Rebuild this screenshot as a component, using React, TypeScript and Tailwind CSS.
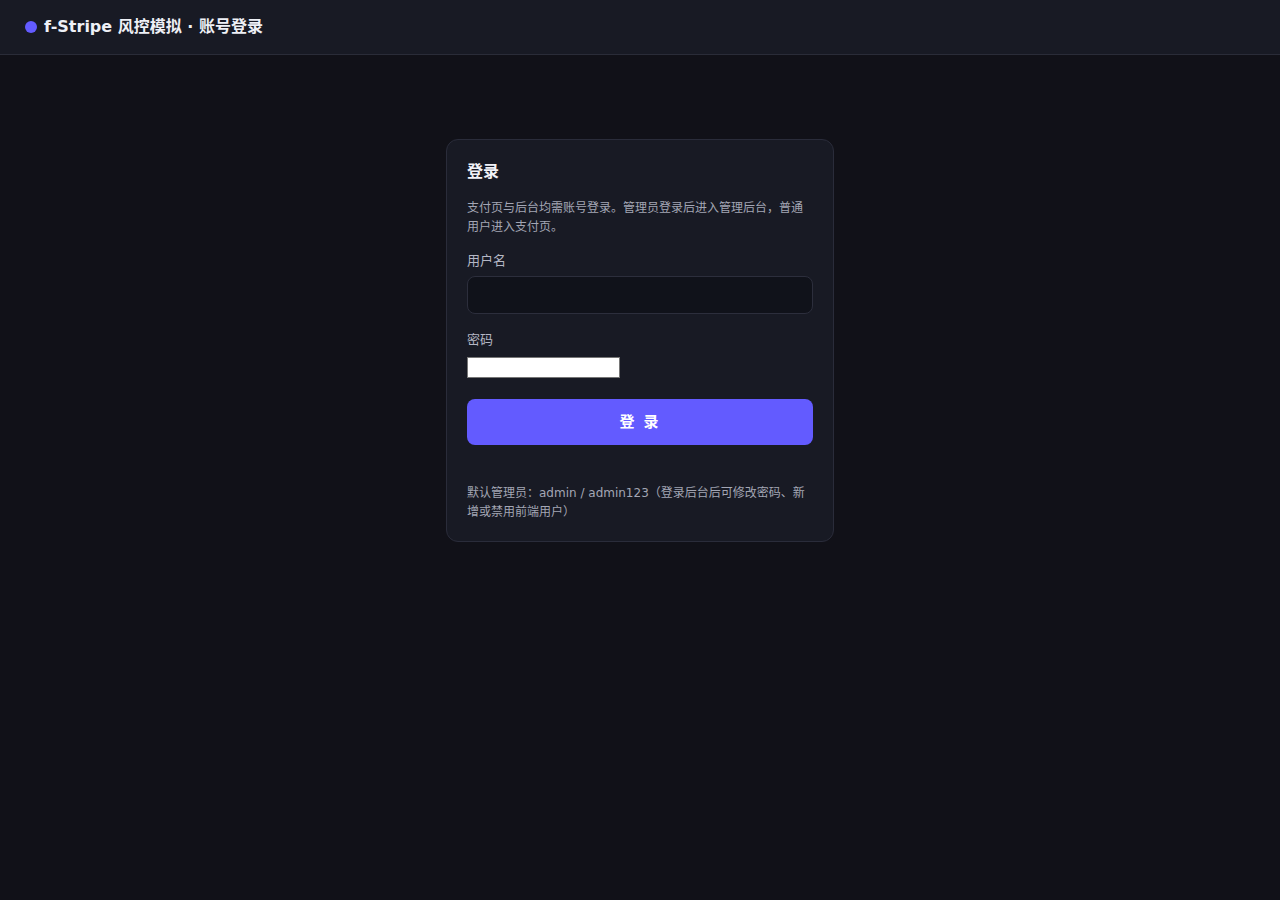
import React from "react";

export default function App() {
  return (
    <div
      className="min-h-[900px] bg-[#111118] text-[#e6e7ee]"
      style={{ fontFamily: '"DejaVu Sans", "Noto Sans CJK SC", sans-serif' }}
    >
      <header className="h-[55px] bg-[#181a24] border-b border-[#2a2c38] flex items-center px-[25px]">
        <span className="w-3 h-3 rounded-full bg-[#635bff] mr-[7px]" />
        <span className="text-[16px] font-bold text-[#eef0f6]">f-Stripe 风控模拟 · 账号登录</span>
      </header>
      <main className="flex justify-center pt-[84px]">
        <div className="w-[388px] bg-[#181a24] border border-[#2a2c3a] rounded-xl px-5 pt-5 pb-[19px]">
          <h1 className="text-[16px] leading-6 font-bold text-[#f1f2f7]">登录</h1>
          <p className="mt-[15px] text-[12px] leading-[19px] text-[#a3a6b4]">
            支付页与后台均需账号登录。管理员登录后进入管理后台，普通用户进入支付页。
          </p>
          <label className="block mt-[14px] text-[13px] leading-5 text-[#b4b7c4]">用户名</label>
          <input
            type="text"
            className="mt-[5px] block w-full h-[38px] rounded-lg bg-[#10121a] border border-[#2c2e3c] px-3 text-[14px] outline-none"
          />
          <label className="block mt-[16px] text-[13px] leading-5 text-[#b4b7c4]">密码</label>
          <input
            type="password"
            className="mt-[7px] block w-[153px] h-[21px] bg-white border border-[#767676] text-black text-[13px]"
          />
          <button className="mt-[21px] w-full h-[46px] rounded-lg bg-[#635bff] text-white text-[15px] font-bold tracking-[2px]">
            登 录
          </button>
          <p className="mt-[39px] text-[12px] leading-[19px] text-[#a3a6b4]">
            默认管理员：admin / admin123（登录后台后可修改密码、新增或禁用前端用户）
          </p>
        </div>
      </main>
    </div>
  );
}
